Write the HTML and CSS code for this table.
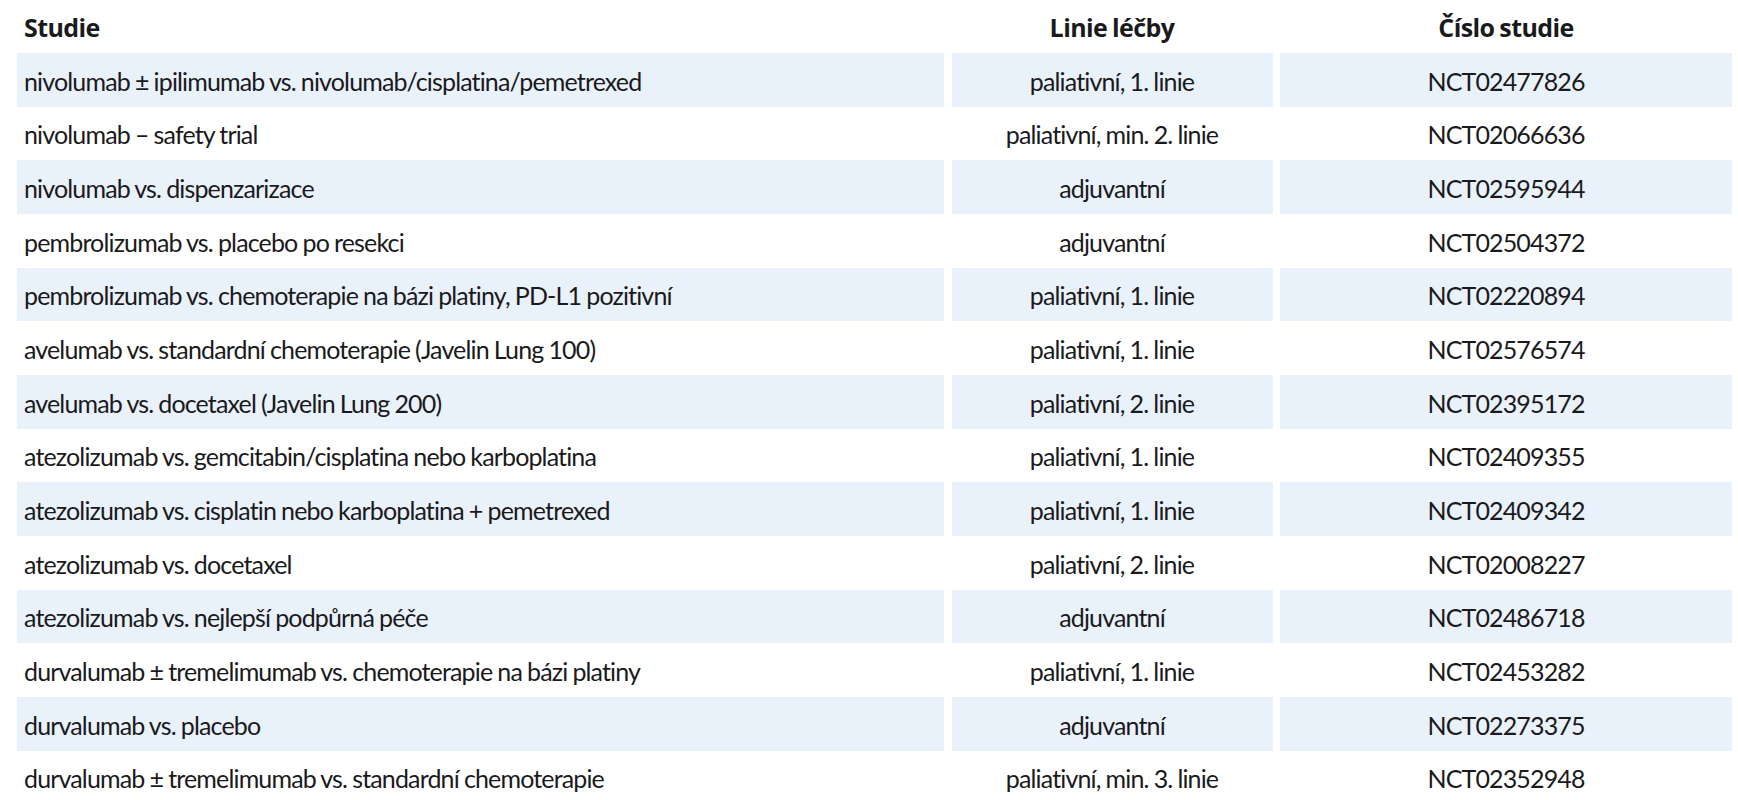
FILE: index.html
```html
<!DOCTYPE html>
<html lang="cs">
<head>
<meta charset="utf-8">
<link rel="stylesheet" href="styles.css">
</head>
<body>
<div class="table">
  <div class="row head">
    <div class="cell left">Studie</div>
    <div class="cell">Linie léčby</div>
    <div class="cell">Číslo studie</div>
  </div>
  <div class="row alt"><div class="cell left">nivolumab ± ipilimumab vs. nivolumab/cisplatina/pemetrexed</div><div class="cell">paliativní, 1. linie</div><div class="cell">NCT02477826</div></div>
  <div class="row"><div class="cell left">nivolumab – safety trial</div><div class="cell">paliativní, min. 2. linie</div><div class="cell">NCT02066636</div></div>
  <div class="row alt"><div class="cell left">nivolumab vs. dispenzarizace</div><div class="cell">adjuvantní</div><div class="cell">NCT02595944</div></div>
  <div class="row"><div class="cell left">pembrolizumab vs. placebo po resekci</div><div class="cell">adjuvantní</div><div class="cell">NCT02504372</div></div>
  <div class="row alt"><div class="cell left">pembrolizumab vs. chemoterapie na bázi platiny, PD-L1 pozitivní</div><div class="cell">paliativní, 1. linie</div><div class="cell">NCT02220894</div></div>
  <div class="row"><div class="cell left">avelumab vs. standardní chemoterapie (Javelin Lung 100)</div><div class="cell">paliativní, 1. linie</div><div class="cell">NCT02576574</div></div>
  <div class="row alt"><div class="cell left">avelumab vs. docetaxel (Javelin Lung 200)</div><div class="cell">paliativní, 2. linie</div><div class="cell">NCT02395172</div></div>
  <div class="row"><div class="cell left">atezolizumab vs. gemcitabin/cisplatina nebo karboplatina</div><div class="cell">paliativní, 1. linie</div><div class="cell">NCT02409355</div></div>
  <div class="row alt"><div class="cell left">atezolizumab vs. cisplatin nebo karboplatina + pemetrexed</div><div class="cell">paliativní, 1. linie</div><div class="cell">NCT02409342</div></div>
  <div class="row"><div class="cell left">atezolizumab vs. docetaxel</div><div class="cell">paliativní, 2. linie</div><div class="cell">NCT02008227</div></div>
  <div class="row alt"><div class="cell left">atezolizumab vs. nejlepší podpůrná péče</div><div class="cell">adjuvantní</div><div class="cell">NCT02486718</div></div>
  <div class="row"><div class="cell left">durvalumab ± tremelimumab vs. chemoterapie na bázi platiny</div><div class="cell">paliativní, 1. linie</div><div class="cell">NCT02453282</div></div>
  <div class="row alt"><div class="cell left">durvalumab vs. placebo</div><div class="cell">adjuvantní</div><div class="cell">NCT02273375</div></div>
  <div class="row"><div class="cell left">durvalumab ± tremelimumab vs. standardní chemoterapie</div><div class="cell">paliativní, min. 3. linie</div><div class="cell">NCT02352948</div></div>
</div>
</body>
</html>
```

FILE: styles.css
```css
html, body {
  margin: 0;
  padding: 0;
  background: #ffffff;
}

body {
  font-family: "Lato", "Noto Sans", sans-serif;
  color: #1a1a1c;
}

.table {
  padding-left: 17px;
  width: 1715px;
}

.row {
  display: grid;
  grid-template-columns: 927px 321px 452px;
  column-gap: 7.5px;
  height: 53.67px;
}

.cell {
  display: flex;
  align-items: center;
  justify-content: center;
  font-size: 25px;
  letter-spacing: -0.85px;
  word-spacing: -0.5px;
  white-space: nowrap;
  padding-top: 2px;
}

.head {
  height: 53px;
}

.head .cell {
  font-family: "Open Sans", "Lato", sans-serif;
  font-weight: 700;
  font-size: 25px;
  letter-spacing: -0.6px;
  word-spacing: -1px;
  padding-top: 0;
}

.cell.left {
  justify-content: flex-start;
  padding-left: 7px;
}

.alt .cell {
  background: #e9f1fa;
}
```
